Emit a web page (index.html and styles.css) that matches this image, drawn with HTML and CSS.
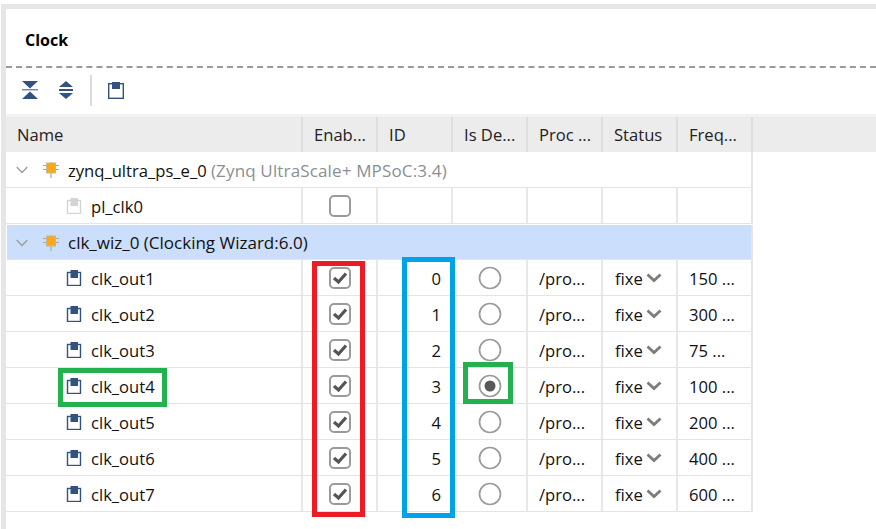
FILE: index.html
```html
<!DOCTYPE html>
<html lang="en">
<head>
<meta charset="utf-8">
<title>Clock</title>
<link rel="stylesheet" href="styles.css">
</head>
<body>
<svg class="defs" width="0" height="0">
  <symbol id="pin" viewBox="0 0 16 16">
    <path d="M8 0v16M0 3.500h3M0 7.500h3M13 3.500h3M13 7.500h3" stroke="#a9a9a9" stroke-width="1.200" fill="none"/>
    <rect x="3.500" y="1" width="9" height="10" fill="#f9a81c" stroke="#c9b78c" stroke-width="1"/>
  </symbol>
  <symbol id="port" viewBox="0 0 16 16">
    <rect x="1.500" y="2.500" width="13" height="13" fill="#fff" stroke="currentColor" stroke-width="1.400"/>
    <rect x="4.500" y="0" width="7.500" height="8" fill="currentColor"/>
  </symbol>
  <symbol id="check" viewBox="0 0 22 22">
    <rect x="1" y="1" width="20" height="20" rx="4" fill="#fff" stroke="#9b9b9b" stroke-width="2"/>
  </symbol>
  <symbol id="tick" viewBox="0 0 22 22">
    <path d="M5 11l4.500 4L17 6.500" fill="none" stroke="#555" stroke-width="3.200"/>
  </symbol>
  <symbol id="radio" viewBox="0 0 24 24">
    <circle cx="12" cy="12" r="10.500" fill="#fff" stroke="#9b9b9b" stroke-width="1.700"/>
  </symbol>
  <symbol id="caret" viewBox="0 0 16 10">
    <path d="M1.500 1.500L8 7.500l6.500-6" fill="none" stroke="#7c7c7c" stroke-width="2.800"/>
  </symbol>
  <symbol id="twisty" viewBox="0 0 12 8">
    <path d="M.7 1l5.300 5.500L11.300 1" fill="none" stroke="#9c9c9c" stroke-width="1.300"/>
  </symbol>
</svg>

<main class="panel">
  <h1 class="title">Clock</h1>
  <div class="toolbar">
    <svg class="tool" viewBox="0 0 16 20" width="16" height="20"><path d="M0 1h16L8 8.500zM0 19h16L8 11.500z" fill="#34527f"/><path d="M0 9.800h16" stroke="#34527f" stroke-width="1"/></svg>
    <svg class="tool tool-b" viewBox="0 0 16 20" width="16" height="20"><path d="M8 1l7 6H1zM8 19l-7-6h14z" fill="#34527f"/><path d="M1 10h14" stroke="#34527f" stroke-width="2"/></svg>
    <span class="tool-sep"></span>
    <svg class="tool" viewBox="0 0 16 17" width="16" height="17"><rect x=".7" y="1.700" width="14.600" height="14.600" fill="#fff" stroke="#34527f" stroke-width="1.400"/><rect x="4" y="0" width="8" height="7" fill="#34527f"/></svg>
  </div>

  <div class="table">
    <div class="row head">
      <div class="cell name">Name</div>
      <div class="cell">Enab...</div>
      <div class="cell">ID</div>
      <div class="cell">Is De...</div>
      <div class="cell">Proc ...</div>
      <div class="cell">Status</div>
      <div class="cell">Freq...</div>
    </div>

    <div class="row group">
      <div class="group-label"><svg class="twisty"><use href="#twisty"/></svg><svg class="pin"><use href="#pin"/></svg><span>zynq_ultra_ps_e_0 <span class="muted">(Zynq UltraScale+ MPSoC:3.4)</span></span></div>
    </div>
    <div class="row">
      <div class="cell name child"><svg class="port off"><use href="#port"/></svg>pl_clk0</div>
      <div class="cell center"><svg class="check"><use href="#check"/></svg></div>
      <div class="cell"></div><div class="cell"></div><div class="cell"></div><div class="cell"></div><div class="cell"></div>
    </div>
    <div class="row group selected">
      <div class="group-label"><svg class="twisty"><use href="#twisty"/></svg><svg class="pin"><use href="#pin"/></svg><span>clk_wiz_0 (Clocking Wizard:6.0)</span></div>
    </div>

    <div class="row">
      <div class="cell name child"><svg class="port"><use href="#port"/></svg>clk_out1</div>
      <div class="cell center"><svg class="check"><use href="#check"/><use href="#tick"/></svg></div>
      <div class="cell num">0</div>
      <div class="cell center"><svg class="radio"><use href="#radio"/></svg></div>
      <div class="cell">/pro...</div>
      <div class="cell status">fixe<svg class="caret"><use href="#caret"/></svg></div>
      <div class="cell">150 ...</div>
    </div>
    <div class="row">
      <div class="cell name child"><svg class="port"><use href="#port"/></svg>clk_out2</div>
      <div class="cell center"><svg class="check"><use href="#check"/><use href="#tick"/></svg></div>
      <div class="cell num">1</div>
      <div class="cell center"><svg class="radio"><use href="#radio"/></svg></div>
      <div class="cell">/pro...</div>
      <div class="cell status">fixe<svg class="caret"><use href="#caret"/></svg></div>
      <div class="cell">300 ...</div>
    </div>
    <div class="row">
      <div class="cell name child"><svg class="port"><use href="#port"/></svg>clk_out3</div>
      <div class="cell center"><svg class="check"><use href="#check"/><use href="#tick"/></svg></div>
      <div class="cell num">2</div>
      <div class="cell center"><svg class="radio"><use href="#radio"/></svg></div>
      <div class="cell">/pro...</div>
      <div class="cell status">fixe<svg class="caret"><use href="#caret"/></svg></div>
      <div class="cell">75 ...</div>
    </div>
    <div class="row">
      <div class="cell name child"><svg class="port"><use href="#port"/></svg>clk_out4</div>
      <div class="cell center"><svg class="check"><use href="#check"/><use href="#tick"/></svg></div>
      <div class="cell num">3</div>
      <div class="cell center"><svg class="radio"><use href="#radio"/><circle cx="12" cy="12" r="5.500" fill="#595959"/></svg></div>
      <div class="cell">/pro...</div>
      <div class="cell status">fixe<svg class="caret"><use href="#caret"/></svg></div>
      <div class="cell">100 ...</div>
    </div>
    <div class="row">
      <div class="cell name child"><svg class="port"><use href="#port"/></svg>clk_out5</div>
      <div class="cell center"><svg class="check"><use href="#check"/><use href="#tick"/></svg></div>
      <div class="cell num">4</div>
      <div class="cell center"><svg class="radio"><use href="#radio"/></svg></div>
      <div class="cell">/pro...</div>
      <div class="cell status">fixe<svg class="caret"><use href="#caret"/></svg></div>
      <div class="cell">200 ...</div>
    </div>
    <div class="row">
      <div class="cell name child"><svg class="port"><use href="#port"/></svg>clk_out6</div>
      <div class="cell center"><svg class="check"><use href="#check"/><use href="#tick"/></svg></div>
      <div class="cell num">5</div>
      <div class="cell center"><svg class="radio"><use href="#radio"/></svg></div>
      <div class="cell">/pro...</div>
      <div class="cell status">fixe<svg class="caret"><use href="#caret"/></svg></div>
      <div class="cell">400 ...</div>
    </div>
    <div class="row">
      <div class="cell name child"><svg class="port"><use href="#port"/></svg>clk_out7</div>
      <div class="cell center"><svg class="check"><use href="#check"/><use href="#tick"/></svg></div>
      <div class="cell num">6</div>
      <div class="cell center"><svg class="radio"><use href="#radio"/></svg></div>
      <div class="cell">/pro...</div>
      <div class="cell status">fixe<svg class="caret"><use href="#caret"/></svg></div>
      <div class="cell">600 ...</div>
    </div>
  </div>
</main>

<div class="mark mark-red"></div>
<div class="mark mark-blue"></div>
<div class="mark mark-green-name"></div>
<div class="mark mark-green-radio"></div>
</body>
</html>
```
FILE: styles.css
```css
* { box-sizing: border-box; }
html, body { margin: 0; height: 100%; }
body {
  position: relative;
  width: 876px;
  height: 529px;
  overflow: hidden;
  background: #fff;
  padding: 4px 0 0 1px;
  font-family: "Open Sans", "Noto Sans", sans-serif;
  font-size: 16.600px;
  color: #111;
}
.defs { position: absolute; }

.panel {
  height: 525px;
  background: #fff;
  border-top: 5px solid #e6e6e6;
  border-left: 5px solid #e6e6e6;
}
.title {
  margin: 0;
  height: 59px;
  padding: 20px 0 0 19px;
  font-size: 16px;
  line-height: 22px;
  font-weight: 700;
  color: #000;
  border-bottom: 2px dashed #9a9a9a;
}
.toolbar {
  height: 49px;
  display: flex;
  align-items: center;
  padding: 0 0 2px 16px;
  border-bottom: 3px solid #f2f2f2;
}
.tool { flex: none; }
.tool-b { margin-left: 20px; }
.tool-sep {
  width: 2px;
  height: 31px;
  margin: 0 16px 0 16px;
  background: #dcdcdc;
}

.table { width: 876px; }
.row {
  display: grid;
  grid-template-columns: 297px repeat(6, 75px);
  width: 747px;
  height: 36px;
  border-bottom: 1px solid #e4e4e4;
  border-right: 2px solid #e4e4e4;
  align-items: stretch;
}
.cell {
  display: flex;
  align-items: center;
  padding-left: 11px;
  padding-top: 2px;
  border-right: 2px solid #e8e8e8;
  white-space: nowrap;
  overflow: hidden;
  min-width: 0;
}
.cell svg { margin-top: -2px; }
.cell:last-child { border-right: 0; }
.head {
  width: 871px;
  height: 35px;
  background: #ececec;
  border: 0;
  grid-template-columns: 297px repeat(6, 75px) 1fr;
}
.head .cell { color: #222; border-right-color: #dedede; padding-top: 0; }
.head .cell:last-child { border-right: 2px solid #dedede; }
.child { padding-left: 60px; gap: 9px; }
.center { justify-content: center; padding: 0; }
.center svg { margin-top: 0; }
.num { justify-content: flex-end; padding-right: 10px; }
.status { gap: 3px; padding-left: 12px; }

.group { display: flex; }
.group-label {
  display: flex;
  align-items: center;
  padding-left: 10px;
  padding-top: 1px;
  white-space: nowrap;
}
.selected { background: #cbdefb; height: 35px; margin-top: 1px; margin-left: 1px; width: 746px; font-size: 17px; }
.selected .group-label { padding-left: 9px; }
.muted { color: #8a8f96; font-size: 17px; letter-spacing: .15px; }

.twisty { width: 12px; height: 8px; flex: none; }
.pin { width: 16px; height: 16px; margin: 0 9px 0 15px; flex: none; }
.port { width: 16px; height: 16px; color: #34527f; flex: none; }
.port.off { color: #d4d4d4; }
.check { width: 22px; height: 22px; }
.radio { width: 24px; height: 24px; }
.caret { width: 16px; height: 10px; flex: none; }

.mark { position: absolute; border-style: solid; border-width: 5px; }
.mark-red { left: 312px; top: 261px; width: 53px; height: 256px; border-color: #ed1c24; }
.mark-blue { left: 402px; top: 257px; width: 53px; height: 261px; border-color: #00a2e8; }
.mark-green-name { left: 58px; top: 368px; width: 109px; height: 39px; border-color: #22b14c; }
.mark-green-radio { left: 463px; top: 362px; width: 50px; height: 42px; border-color: #22b14c; }
```
